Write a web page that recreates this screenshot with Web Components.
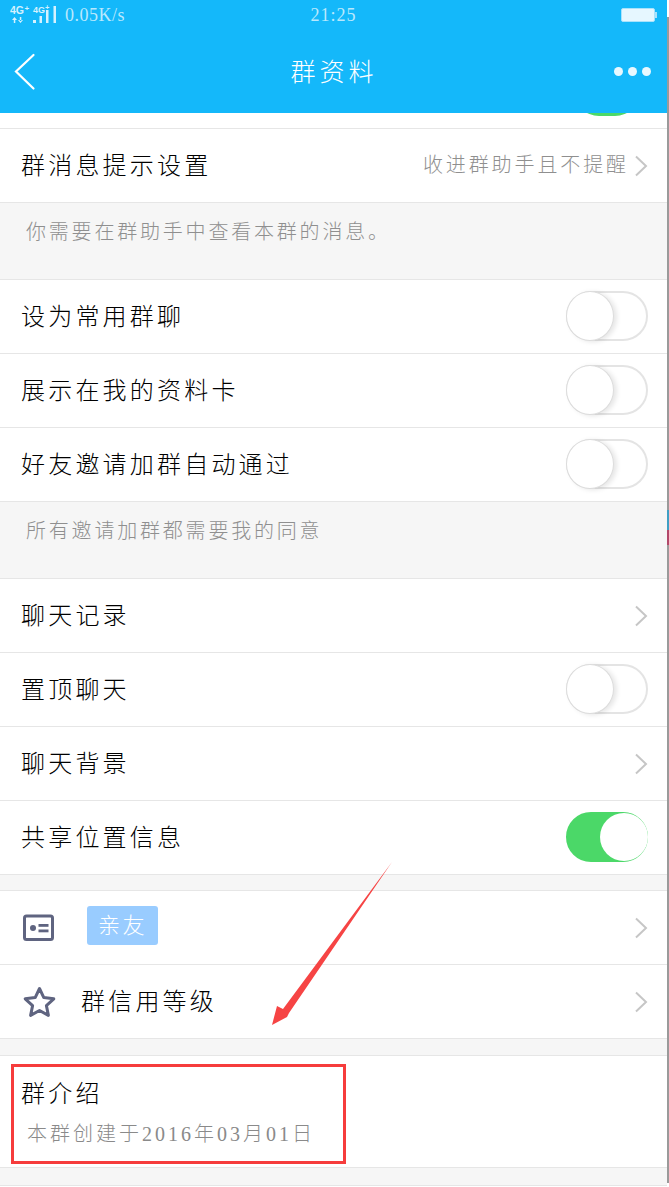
<!DOCTYPE html>
<html lang="zh">
<head>
<meta charset="utf-8">
<title>群资料</title>
<style>
  html, body { margin: 0; padding: 0; background: #fff; }
  body {
    position: relative;
    width: 669px;
    height: 1187px;
    overflow: hidden;
    font-family: "Liberation Serif", "Noto Sans CJK SC", serif;
    color: #000;
  }
  .tag-icon { display: block; }
</style>
</head>
<body>
  <app-header></app-header>
  <app-section spacer></app-section>
  <app-row>群消息提示设置<span slot="value">收进群助手且不提醒</span><app-chevron slot="end"></app-chevron></app-row>
  <app-hint>你需要在群助手中查看本群的消息。</app-hint>

  <app-section></app-section>
  <app-row>设为常用群聊<app-toggle slot="end"></app-toggle></app-row>
  <app-row>展示在我的资料卡<app-toggle slot="end"></app-toggle></app-row>
  <app-row>好友邀请加群自动通过<app-toggle slot="end"></app-toggle></app-row>
  <app-hint>所有邀请加群都需要我的同意</app-hint>

  <app-section></app-section>
  <app-row>聊天记录<app-chevron slot="end"></app-chevron></app-row>
  <app-row>置顶聊天<app-toggle slot="end"></app-toggle></app-row>
  <app-row>聊天背景<app-chevron slot="end"></app-chevron></app-row>
  <app-row>共享位置信息<app-toggle slot="end" on></app-toggle></app-row>

  <app-gap size="15"></app-gap>
  <app-section></app-section>
  <app-row>
    <svg slot="icon" class="tag-icon" width="32" height="28" viewBox="0 0 32 28">
      <rect x="2.500" y="2" width="28" height="23.500" rx="2" fill="none" stroke="#5f6480" stroke-width="3"/>
      <circle cx="11" cy="14" r="3" fill="#5f6480"/>
      <rect x="16.500" y="10" width="10" height="2.800" fill="#5f6480"/>
      <rect x="16.500" y="15.500" width="10" height="2.800" fill="#5f6480"/>
    </svg>
    <app-tag>亲友</app-tag>
    <app-chevron slot="end"></app-chevron>
  </app-row>
  <app-row>
    <svg slot="icon" class="tag-icon" width="36" height="34" viewBox="0 0 36 34">
      <path d="M17.500 3.500 L21.800 12.600 L31.800 13.800 L24.400 20.600 L26.400 30.400 L17.500 25.500 L8.600 30.400 L10.600 20.600 L3.200 13.800 L13.200 12.600 Z" fill="none" stroke="#5f6480" stroke-width="3" stroke-linejoin="round"/>
    </svg>
    <span style="margin-left:-6px">群信用等级</span>
    <app-chevron slot="end"></app-chevron>
  </app-row>

  <app-gap size="16"></app-gap>
  <app-section></app-section>
  <app-intro><span slot="title">群介绍</span>本群创建于2016年03月01日</app-intro>
  <app-gap size="17"></app-gap>
  <app-section></app-section>

  <app-annotation></app-annotation>

<script>
function define(name, markup, setup) {
  customElements.define(name, class extends HTMLElement {
    constructor() {
      super();
      this.attachShadow({ mode: "open" });
      this.shadowRoot.innerHTML = markup;
    }
    connectedCallback() {
      if (setup) setup.call(this);
    }
  });
}

define("app-header", `
  <style>
    :host { display: block; height: 113px; background: #14b8fa; color: #fff; }
    .status { display: grid; grid-template-columns: 1fr auto 1fr; align-items: center; height: 30px; padding: 0 12px 0 10px; color: #b9e8fd; font-size: 18px; }
    .left { display: flex; align-items: center; }
    .signal { display: block; margin-right: 7px; }
    .speed { letter-spacing: .5px; }
    .time { letter-spacing: 1px; }
    .battery { display: flex; align-items: center; justify-content: flex-end; }
    .cell { width: 32px; height: 12px; border: 1.500px solid #a8e2fc; border-radius: 2px; background: #e6f7ff; }
    .tip { width: 2.500px; height: 6px; background: #a8e2fc; }
    .nav { display: flex; align-items: center; height: 83px; padding: 0 18px 0 13px; }
    .back { display: block; }
    .title { flex: 1; text-align: center; padding: 0 0 4px 17px; font-size: 25px; letter-spacing: 4px; font-family: "Noto Sans CJK SC", serif; font-weight: 300; }
    .dots { display: flex; gap: 5px; }
    .dots i { width: 9px; height: 9px; border-radius: 50%; background: #e8f8ff; }
  </style>
  <div class="status">
    <span class="left">
      <svg class="signal" width="48" height="22" viewBox="0 0 48 22">
        <g fill="#d5f1fe" font-family="Liberation Sans, sans-serif" font-weight="700">
          <text x="0" y="10" font-size="10.500">4G</text>
          <text x="14.500" y="7" font-size="8">+</text>
          <text x="23" y="9" font-size="9">4G</text>
          <text x="35" y="6" font-size="7.500">+</text>
          <path d="M3.800 15h1.500v4h-1.500zM2 16l2.500-3 2.500 3zM9.800 13h1.500v4h-1.500zM8 16l2.500 3 2.500-3z"/>
          <rect x="23" y="16" width="3" height="3"/>
          <rect x="29.500" y="12" width="2.500" height="7"/>
          <rect x="36" y="6" width="2.500" height="13"/>
          <rect x="43.500" y="2" width="2.500" height="17"/>
        </g>
      </svg>
      <span class="speed">0.05K/s</span>
    </span>
    <span class="time">21:25</span>
    <span class="battery"><span class="cell"></span><span class="tip"></span></span>
  </div>
  <div class="nav">
    <svg class="back" width="24" height="38" viewBox="0 0 24 38"><path d="M20.500 2 L3 18.500 L20.500 35.500" fill="none" stroke="#fff" stroke-width="2.200" stroke-linecap="round" stroke-linejoin="miter"/></svg>
    <span class="title">群资料</span>
    <span class="dots"><i></i><i></i><i></i></span>
  </div>
`);

define("app-section", `
  <style>
    :host { display: block; background: #fff; border-bottom: 1px solid #e6e6e6; position: relative; overflow: hidden; }
    :host([spacer]) { height: 15px; }
    .peek { display: none; position: absolute; left: 574px; top: -47px; width: 66px; height: 50px; border-radius: 25px; background: #4bd868; }
    :host([spacer]) .peek { display: block; }
  </style>
  <div class="peek"></div>
`);

define("app-row", `
  <style>
    :host { display: flex; align-items: center; box-sizing: border-box; height: 74px; padding: 0 21px 0 21px; background: #fff; border-bottom: 1px solid #e6e6e6; font: 300 24px "Liberation Serif", "Noto Sans CJK SC", serif; letter-spacing: 3.200px; color: #000; }
    .icon { display: flex; align-items: center; width: 65px; margin-left: 1px; }
    .icon:not(.has) { display: none; }
    .main { flex: 1; display: flex; align-items: center; white-space: nowrap; padding-bottom: 5px; }
    .value { font-size: 20px; letter-spacing: 2.900px; color: #8f8f8f; margin-right: 5px; padding-bottom: 5px; }
    ::slotted(app-toggle) { margin-top: -2px; }
  </style>
  <span class="icon"><slot name="icon"></slot></span>
  <span class="main"><slot></slot></span>
  <span class="value"><slot name="value"></slot></span>
  <slot name="end"></slot>
`, function () {
  if (this.querySelector('[slot="icon"]')) this.shadowRoot.querySelector(".icon").classList.add("has");
});

define("app-chevron", `
  <style>
    :host { display: block; width: 14px; height: 22px; }
    svg { display: block; }
  </style>
  <svg width="14" height="22" viewBox="0 0 14 22"><path d="M2 1.500 L12 11 L2 20.500" fill="none" stroke="#c6c6c6" stroke-width="2"/></svg>
`);

define("app-toggle", `
  <style>
    :host { display: block; box-sizing: border-box; width: 82px; height: 50px; border: 2px solid #e4e4e4; border-radius: 25px; background: #fff; position: relative; }
    .knob { position: absolute; left: -2px; top: -2px; box-sizing: border-box; width: 48px; height: 50px; border-radius: 50%; background: #fff; border: 1px solid #dcdcdc; box-shadow: 3px 1px 5px rgba(0,0,0,.1); }
    :host([on]) { background: #4bd868; border-color: #4bd868; }
    :host([on]) .knob { left: 32px; top: -1px; height: 48px; border: 0; box-shadow: none; }
  </style>
  <div class="knob"></div>
`);

define("app-hint", `
  <style>
    :host { display: block; box-sizing: border-box; height: 76px; padding: 14px 0 0 26px; background: #f6f6f6; font: 300 20px/30px "Liberation Serif", "Noto Sans CJK SC", serif; letter-spacing: 2.800px; color: #8f8f8f; }
  </style>
  <slot></slot>
`);

define("app-gap", `
  <style>
    :host { display: block; background: #f6f6f6; }
  </style>
`, function () {
  this.style.height = this.getAttribute("size") + "px";
});

define("app-tag", `
  <style>
    :host { display: flex; align-items: center; justify-content: center; box-sizing: border-box; width: 71px; height: 39px; padding-bottom: 5px; border-radius: 3px; background: #99ccff; color: #fff; font: 300 22px "Noto Sans CJK SC", serif; letter-spacing: 2.500px; }
  </style>
  <slot></slot>
`);

define("app-intro", `
  <style>
    :host { display: block; box-sizing: border-box; height: 112px; padding: 21px 21px 0; background: #fff; border-bottom: 1px solid #e6e6e6; }
    .title { font: 300 24px/34px "Liberation Serif", "Noto Sans CJK SC", serif; letter-spacing: 3.200px; color: #000; }
    .text { margin: 8px 0 0 6px; font: 300 20px/30px "Liberation Serif", "Noto Sans CJK SC", serif; letter-spacing: 3px; color: #8a8a8a; }
  </style>
  <div class="title"><slot name="title"></slot></div>
  <div class="text"><slot></slot></div>
`);

// red marks and the grey edge of the screenshot, drawn on top
define("app-annotation", `
  <style>
    :host { position: absolute; inset: 0; display: block; pointer-events: none; }
    .box { position: absolute; left: 11px; top: 1064px; width: 335px; height: 100px; box-sizing: border-box; border: 3px solid #f63c3c; }
    svg { position: absolute; left: 0; top: 0; }
    .edge { position: absolute; left: 667px; top: 0; width: 2px; height: 1187px; background: linear-gradient(#fff 0 17px, #9a9a9a 17px 510px, #3f9fc4 510px 530px, #b2486a 530px 545px, #9a9a9a 545px 1183px, #fff 1183px); }
  </style>
  <svg width="669" height="1187" viewBox="0 0 669 1187">
    <polygon points="392,862 289,1013 287,1017 272,1025 277,1006 283,1009" fill="#f64444"/>
  </svg>
  <div class="box"></div>
  <div class="edge"></div>
`);
</script>
</body>
</html>
